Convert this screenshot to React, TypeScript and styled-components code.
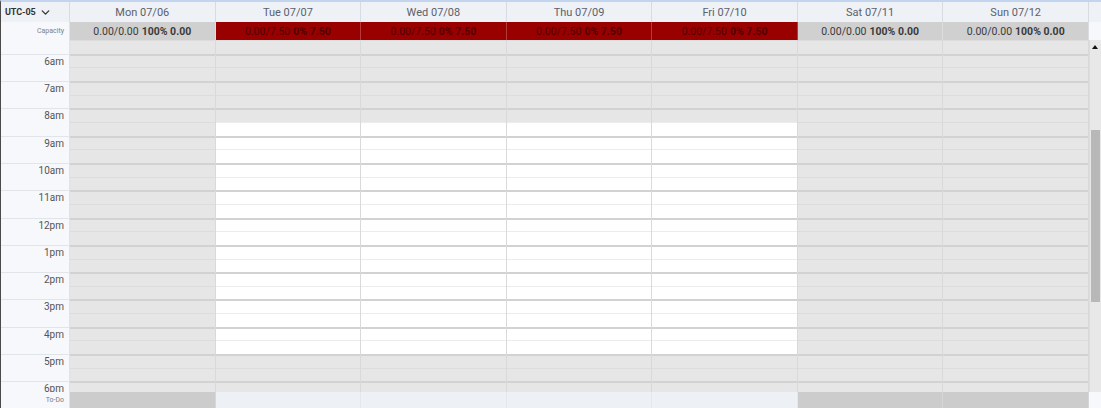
import React from "react";
import styled, { createGlobalStyle } from "styled-components";
import { ChevronDown } from "lucide-react";

const GlobalStyle = createGlobalStyle`
  html, body {
    margin: 0;
    padding: 0;
    background: #ffffff;
  }
  body {
    font-family: Roboto, "Liberation Sans", Arial, sans-serif;
  }
`;

type Day = {
  label: string;
  hours: number; // scheduled capacity
  working: boolean;
};

const days: Day[] = [
  { label: "Mon 07/06", hours: 0, working: false },
  { label: "Tue 07/07", hours: 7.5, working: true },
  { label: "Wed 07/08", hours: 7.5, working: true },
  { label: "Thu 07/09", hours: 7.5, working: true },
  { label: "Fri 07/10", hours: 7.5, working: true },
  { label: "Sat 07/11", hours: 0, working: false },
  { label: "Sun 07/12", hours: 0, working: false },
];

// slot 0 is 5:30-6:00, then half-hour slots from 6am on
const SLOT = 41 / 3;
const slots = Array.from({ length: 27 }, (_, i) => {
  const minutes = 5 * 60 + 30 + i * 30;
  return { minutes, hourStart: minutes % 60 === 0 };
});

const WORK_START = 8 * 60 + 30;
const WORK_END = 17 * 60;

const hourLabel = (minutes: number) => {
  const h = Math.floor(minutes / 60);
  const suffix = h >= 12 ? "pm" : "am";
  const h12 = h % 12 === 0 ? 12 : h % 12;
  return `${h12}${suffix}`;
};

const Calendar = styled.div`
  width: 1101px;
  height: 408px;
  box-sizing: border-box;
  border-top: 2px solid #c3d5ee;
  border-left: 1px solid #4a4a4a;
  display: flex;
  flex-direction: column;
  overflow: hidden;
`;

const Row = styled.div<{ $height: number }>`
  display: grid;
  grid-template-columns: 69px repeat(7, 1fr) 12px;
  height: ${(p) => p.$height}px;
  flex-shrink: 0;
`;

const Corner = styled.div`
  background: #eef1f6;
  border-right: 1px solid #d8dce2;
  display: flex;
  align-items: center;
  padding-left: 4px;
  gap: 3px;
  font-size: 9px;
  font-weight: 700;
  color: #333;
  letter-spacing: -0.1px;
`;

const DayHead = styled.div`
  background: #eef1f6;
  border-right: 1px solid #d8dce2;
  display: flex;
  align-items: center;
  justify-content: center;
  font-size: 11px;
  color: #5b606b;
`;

const HeadFiller = styled.div`
  background: #eef1f6;
`;

const SideLabel = styled.div`
  background: #f6f8fc;
  border-right: 1px solid #dfe2e7;
  display: flex;
  align-items: center;
  justify-content: flex-end;
  padding-right: 5px;
  font-size: 7px;
  color: #7d7f83;
`;

const CapacityCell = styled.div<{ $over: boolean }>`
  background: ${(p) => (p.$over ? "#990000" : "#d0d0d0")};
  border-right: 1px solid ${(p) => (p.$over ? "#b53a3a" : "#dcdcdc")};
  display: flex;
  align-items: center;
  justify-content: center;
  gap: 3px;
  font-size: 10.5px;
  color: ${(p) => (p.$over ? "#520000" : "#3a3a3a")};

  b {
    font-weight: 700;
  }
`;

const PlainFiller = styled.div`
  background: #f6f8fc;
`;

const Body = styled.div`
  display: grid;
  grid-template-columns: 69px repeat(7, 1fr) 12px;
  height: 352px;
  flex-shrink: 0;
  overflow: hidden;
`;

const Gutter = styled.div`
  background: #f6f8fc;
  border-right: 1px solid #dfe2e7;
  display: flex;
  flex-direction: column;
`;

const GutterSlot = styled.div<{ $hour: boolean }>`
  height: ${SLOT}px;
  flex-shrink: 0;
  box-sizing: border-box;
  border-top: ${(p) => (p.$hour ? "1px solid #e1e4e8" : "none")};
  position: relative;
`;

const TimeLabel = styled.span`
  position: absolute;
  right: 5px;
  top: 2px;
  font-size: 10px;
  color: #555;
  line-height: 10px;
  z-index: 1;
`;

const DayColumn = styled.div`
  display: flex;
  flex-direction: column;
  border-right: 1px solid #d9d9d9;
`;

const Slot = styled.div<{ $hour: boolean; $open: boolean }>`
  height: ${SLOT}px;
  flex-shrink: 0;
  box-sizing: border-box;
  background: ${(p) => (p.$open ? "#ffffff" : "#e6e6e6")};
  border-top: ${(p) =>
    p.$hour ? "2px solid #d2d2d2" : `1px solid ${p.$open ? "#ececec" : "#dcdcdc"}`};
`;

const Scrollbar = styled.div`
  background: #e8e8e8;
  border-left: 1px solid #dcdcdc;
  display: flex;
  flex-direction: column;
  align-items: center;
`;

const Arrow = styled.div<{ $down?: boolean }>`
  height: 14px;
  width: 100%;
  display: flex;
  align-items: center;
  justify-content: center;
  flex-shrink: 0;

  &::after {
    content: "";
    border-left: 3.5px solid transparent;
    border-right: 3.5px solid transparent;
    ${(p) =>
      p.$down ? "border-top: 4px solid #111;" : "border-bottom: 4px solid #111;"}
  }
`;

const Track = styled.div`
  flex: 1;
  width: 100%;
  display: flex;
  justify-content: center;
`;

const Thumb = styled.div`
  width: 9px;
  height: 172px;
  margin-top: 76px;
  background: #b8b8b8;
`;

const TodoCell = styled.div<{ $open: boolean }>`
  background: ${(p) => (p.$open ? "#edf0f4" : "#cccccc")};
  border-right: 1px solid ${(p) => (p.$open ? "#e4e7ec" : "#d6d6d6")};
`;

const fmt = (n: number) => n.toFixed(2);

export default function App() {
  return (
    <>
      <GlobalStyle />
      <Calendar>
        <Row $height={20}>
          <Corner>
            UTC-05
            <ChevronDown size={13} strokeWidth={2.4} color="#333" />
          </Corner>
          {days.map((d) => (
            <DayHead key={d.label}>{d.label}</DayHead>
          ))}
          <HeadFiller />
        </Row>

        <Row $height={18}>
          <SideLabel>Capacity</SideLabel>
          {days.map((d) => {
            const over = d.hours > 0;
            const pct = over ? "0%" : "100%";
            return (
              <CapacityCell key={d.label} $over={over}>
                <span>
                  {fmt(0)}/{fmt(d.hours)}
                </span>
                <b>
                  {pct} {fmt(d.hours)}
                </b>
              </CapacityCell>
            );
          })}
          <PlainFiller />
        </Row>

        <Body>
          <Gutter>
            {slots.map((s) => (
              <GutterSlot key={s.minutes} $hour={s.hourStart}>
                {s.hourStart && <TimeLabel>{hourLabel(s.minutes)}</TimeLabel>}
              </GutterSlot>
            ))}
          </Gutter>
          {days.map((d) => (
            <DayColumn key={d.label}>
              {slots.map((s) => (
                <Slot
                  key={s.minutes}
                  $hour={s.hourStart}
                  $open={d.working && s.minutes >= WORK_START && s.minutes < WORK_END}
                />
              ))}
            </DayColumn>
          ))}
          <Scrollbar>
            <Arrow />
            <Track>
              <Thumb />
            </Track>
            <Arrow $down />
          </Scrollbar>
        </Body>

        <Row $height={16}>
          <SideLabel>To-Do</SideLabel>
          {days.map((d) => (
            <TodoCell key={d.label} $open={d.working} />
          ))}
          <PlainFiller />
        </Row>
      </Calendar>
    </>
  );
}
